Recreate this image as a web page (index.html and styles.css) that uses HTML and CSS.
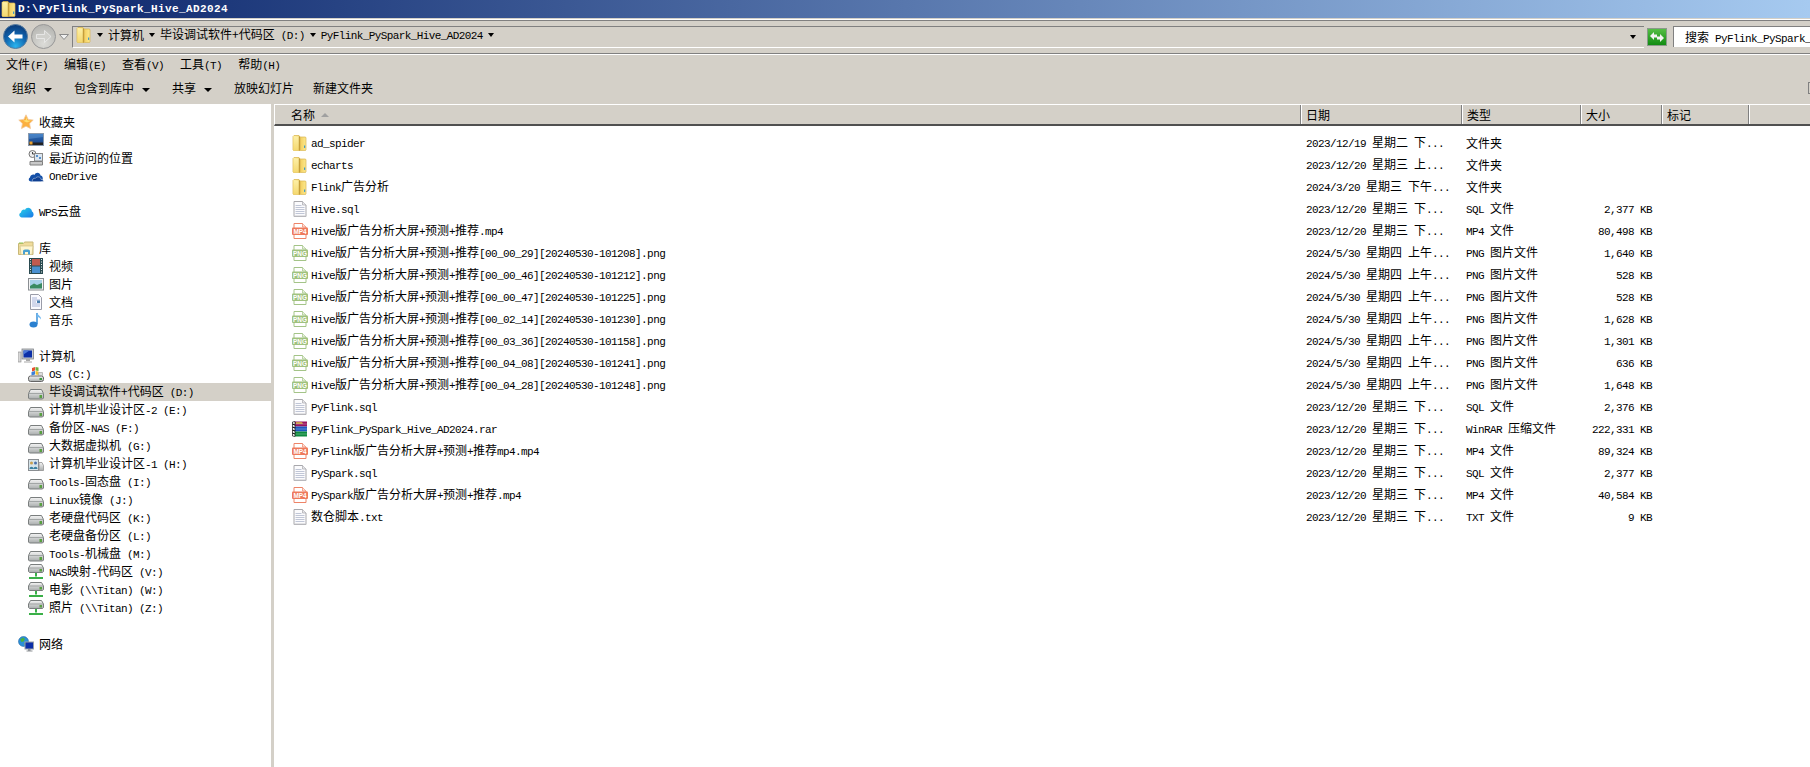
FILE: index.html
```html
<!DOCTYPE html>
<html lang="zh-CN">
<head>
<meta charset="utf-8">
<title>D:\PyFlink_PySpark_Hive_AD2024</title>
<link rel="stylesheet" href="styles.css">
</head>
<body>
<svg class="defs" width="0" height="0" aria-hidden="true">
  <defs>
    <linearGradient id="gFolder" x1="0" y1="0" x2="1" y2="0"><stop offset="0" stop-color="#f6d868"/><stop offset=".6" stop-color="#f4d264"/><stop offset="1" stop-color="#fce88e"/></linearGradient>
    <linearGradient id="gFoldL" x1="0" y1="0" x2="0" y2="1"><stop offset="0" stop-color="#fdf0a8"/><stop offset="1" stop-color="#f4d870"/></linearGradient>
    <linearGradient id="gSky" x1="0" y1="0" x2="0" y2="1"><stop offset="0" stop-color="#2a6fc0"/><stop offset="1" stop-color="#1b3e7c"/></linearGradient>
    <linearGradient id="gCloud" x1="0" y1="0" x2="1" y2="1"><stop offset="0" stop-color="#28d4e8"/><stop offset="1" stop-color="#1a78e8"/></linearGradient>
    <linearGradient id="gHdd" x1="0" y1="0" x2="0" y2="1"><stop offset="0" stop-color="#f4f4f4"/><stop offset="1" stop-color="#a8acac"/></linearGradient>
    <linearGradient id="gGreen" x1="0" y1="0" x2="0" y2="1"><stop offset="0" stop-color="#58c048"/><stop offset="1" stop-color="#0f8a10"/></linearGradient>
    <radialGradient id="gBack" cx=".5" cy=".9" r=".9"><stop offset="0" stop-color="#2ab4ee"/><stop offset=".55" stop-color="#0f62ac"/><stop offset="1" stop-color="#0b3a78"/></radialGradient>
    <radialGradient id="gFwd" cx=".5" cy=".8" r=".8"><stop offset="0" stop-color="#dcdcd8"/><stop offset="1" stop-color="#b4b4b0"/></radialGradient>

    <symbol id="folder" viewBox="0 0 16 16">
      <path d="M1 1.500 2 .5h5l1 1.500h5.500l.5 1V15l-.6.6H1.600L1 15z" fill="url(#gFolder)" stroke="#d8b450" stroke-width=".7"/>
      <path d="M7.200 1.400 L1.400 .9 V15.400 H7.200z" fill="url(#gFoldL)"/>
      <path d="M7.400 1.600 V15.400" stroke="#b8922e" stroke-width="1.200"/>
      <path d="M8.200 2.400 V15" stroke="#e0bc58" stroke-width="1"/>
      <rect x="12" y="10.500" width="1.200" height="2.400" fill="#3f9cc8"/>
    </symbol>
    <symbol id="file" viewBox="0 0 16 16">
      <path d="M2 .5h8.500L14 4v11.500H2z" fill="#fbfbfd" stroke="#a8a8ac"/>
      <path d="M10.500.5V4H14" fill="#e6e6ea" stroke="#a8a8ac" stroke-width=".7"/>
      <path d="M3.500 4.500h6M3.500 6.500h9M3.500 8.500h9M3.500 10.500h9M3.500 12.500h9" stroke="#c0c6d6" stroke-width="1"/>
      <path d="M2 14.500h12v1H2z" fill="#c8c8cc"/>
    </symbol>
    <symbol id="mp4" viewBox="0 0 16 16">
      <path d="M2 .5h8.500L14 4v11.500H2z" fill="#fff" stroke="#ee8468"/>
      <path d="M10.500.5V4H14" fill="#fde2d8" stroke="#ee8468" stroke-width=".7"/>
      <rect x="0" y="4.600" width="16" height="7.400" rx="1" fill="#ee7a5c"/>
      <text class="badge" x="8" y="10.600" text-anchor="middle">MP4</text>
    </symbol>
    <symbol id="png" viewBox="0 0 16 16">
      <path d="M2 .5h8.500L14 4v11.500H2z" fill="#fff" stroke="#a4c488"/>
      <path d="M10.500.5V4H14" fill="#e8f2de" stroke="#a4c488" stroke-width=".7"/>
      <rect x="0" y="4.600" width="16" height="7.400" rx="1" fill="#a0c27e"/>
      <text class="badge" x="8" y="10.600" text-anchor="middle">PNG</text>
    </symbol>
    <symbol id="rar" viewBox="0 0 16 16">
      <path d="M3 .5h12v5H3z" fill="#98145e"/>
      <path d="M4 1.200h6l1 1.600H4z" fill="#d8c040"/>
      <path d="M3 5.500h12v5H3z" fill="#1c58c0"/>
      <path d="M3 10.500h12v5H3z" fill="#0e8a3e"/>
      <path d="M3 3h12M3 8h12M3 13h12" stroke="#fff" stroke-width=".6" opacity=".5"/>
      <path d="M.5 1 3 .5v15L.5 15z" fill="#fff" stroke="#111" stroke-width=".7"/>
      <path d="M.5 3 3 4M.5 6 3 7M.5 9l2.500 1M.5 12 3 13" stroke="#111" stroke-width="1.200"/>
    </symbol>

    <symbol id="star" viewBox="0 0 16 16">
      <path d="M8 .8l2.200 4.600 5 .7-3.600 3.500.9 5-4.500-2.400-4.500 2.400.9-5L.8 6.100l5-.7z" fill="#fbb040" stroke="#f2c89a" stroke-width=".8"/>
      <path d="M8 3l1.500 3.400 3.500.4-4 1.700L5 6.800l3-.7z" fill="#ffe070"/>
    </symbol>
    <symbol id="desktop" viewBox="0 0 16 16">
      <rect x=".5" y="1.500" width="15" height="12" fill="url(#gSky)" stroke="#8898ac"/>
      <path d="M1 10.500h14v2.500H1z" fill="#222"/>
      <rect x="1.500" y="9.500" width="3" height="3" fill="#e8a030"/>
      <path d="M1 2h14v3L1 7z" fill="#7ab0e0" opacity=".35"/>
    </symbol>
    <symbol id="recent" viewBox="0 0 16 16">
      <circle cx="4.500" cy="4" r="3.500" fill="#eee" stroke="#777"/>
      <path d="M4.500 2v2h2" stroke="#444" fill="none"/>
      <rect x="6.500" y="3.500" width="8" height="7.500" fill="#dce6f0" stroke="#888"/>
      <rect x="8" y="5" width="2" height="2" fill="#5a90c8"/><rect x="11" y="7" width="2" height="2" fill="#5a90c8"/>
      <path d="M2 11.500h12.500v3.500H2z" fill="#c8c8c8" stroke="#808080"/>
    </symbol>
    <symbol id="onedrive" viewBox="0 0 16 16">
      <path d="M3 13.500C.6 13.500 0 10.500 2 9.500 2.500 6.500 5.500 6 6.500 7 7.500 3.800 12 3.800 12.500 7.500c2.700.3 3.200 4.500.5 6z" fill="#1450a8"/>
      <path d="M4.500 13.500c-.8-2 1-3.700 3-3.200 1.500-2.500 5.500-1.500 5.500 1.200 1.500-.2 2.500.8 2.500 2z" fill="#0f3f90" stroke="#fff" stroke-width=".4"/>
    </symbol>
    <symbol id="cloud" viewBox="0 0 16 16">
      <path d="M4 13.500C1 13.500.2 9.500 3 8.500 3.500 5.500 6 5 7 6 8 2.600 13.500 3 14 7.500c2.500 1.500 2 6-1 6z" fill="url(#gCloud)"/>
    </symbol>
    <symbol id="library" viewBox="0 0 16 16">
      <path d="M.5 3.500h5l1-1.500h8.500v12.500H.5z" fill="#f0dc9c" stroke="#c8b878"/>
      <path d="M1 2.500h4v1H1z" fill="#90c850"/>
      <path d="M2 6h13l-1 8.500H3z" fill="#fff6d0" stroke="#d0c088" stroke-width=".7"/>
      <path d="M5 14.500V11q0-1.500 2-1.500h3q2 0 2 1.500v3.500h-2V12H7v2.500z" fill="#4aa0d0"/>
    </symbol>
    <symbol id="video" viewBox="0 0 16 16">
      <rect x="1" y="0" width="14" height="16" fill="#2a4a50"/>
      <rect x="4" y="1" width="8" height="6.500" fill="#c05a50"/>
      <rect x="4" y="8.500" width="8" height="6.500" fill="#4a90d0"/>
      <path d="M2 1.500h1M2 4h1M2 6.500h1M2 9h1M2 11.500h1M2 14h1M13 1.500h1M13 4h1M13 6.500h1M13 9h1M13 11.500h1M13 14h1" stroke="#e8f0f0" stroke-width="1.200"/>
    </symbol>
    <symbol id="picture" viewBox="0 0 16 16">
      <rect x=".5" y="2.500" width="15" height="11.500" fill="#f4f4f4" stroke="#8a8e92"/>
      <rect x="2" y="4" width="12" height="8.500" fill="#a8d0e8"/>
      <path d="M2 10l4-2.500 3 1.500 5-2v5.500H2z" fill="#3a8a60"/>
    </symbol>
    <symbol id="doc" viewBox="0 0 16 16">
      <path d="M2.500.5h8l3 3v12h-11z" fill="#fafaff" stroke="#9a9ca8"/>
      <path d="M4 4h5M4 6h8M4 8h4M4 10h8M4 12h8" stroke="#a8b4d8"/>
      <rect x="9" y="6.500" width="3" height="2.500" fill="#4a80b0"/>
    </symbol>
    <symbol id="music" viewBox="0 0 16 16">
      <path d="M9 1v11" stroke="#3a90d8" stroke-width="1.500"/>
      <path d="M9 .5c.5 3 4.500 3.500 4 7-1-2-3-2.500-4-2.500z" fill="#70b8f0"/>
      <ellipse cx="5.500" cy="12.500" rx="4" ry="3" fill="#2a80d0"/>
    </symbol>
    <symbol id="computer" viewBox="0 0 16 16">
      <rect x="0" y="4" width="3" height="10" fill="#d8d8d8" stroke="#888" stroke-width=".6"/>
      <rect x="4" y="1" width="11.500" height="10" fill="#c8ccd0" stroke="#808488" stroke-width=".8"/>
      <rect x="5.500" y="2.500" width="8.500" height="7" fill="#0c2fa8"/>
      <path d="M5.500 2.500h6l-6 4z" fill="#4a78d8"/>
      <path d="M8 11h4v2H8zM6 13.500h8v1H6z" fill="#a8a8a8"/>
    </symbol>
    <symbol id="sysdrive" viewBox="0 0 16 16">
      <rect x=".5" y="10" width="15" height="5.500" rx="2" fill="url(#gHdd)" stroke="#666"/>
      <rect x="11.500" y="12" width="2.500" height="2" fill="#3a9a40"/>
      <path d="M4 2l3-1v3.500l-3 1z" fill="#e85030"/><path d="M7.500 1l3 .5v3.500l-3-.5z" fill="#70b040"/>
      <path d="M3.500 6l3.500-1v3.500l-3.500 1z" fill="#3a80d8"/><path d="M7.500 5l3 .5V9l-3-.5z" fill="#f0c030"/>
      <path d="M10.500 6.500h4v3h-4z" fill="#ddd" stroke="#888" stroke-width=".5"/>
    </symbol>
    <symbol id="hdd" viewBox="0 0 16 16">
      <path d="M2.500 5.500h11l2 4v4.500l-1 1H1.500l-1-1V9.500z" fill="url(#gHdd)" stroke="#7a7e7e"/>
      <path d="M1 9.500h14" stroke="#8c9090" stroke-width=".7"/>
      <rect x="11.500" y="11" width="2.500" height="3" fill="#58a040"/>
    </symbol>
    <symbol id="userdrive" viewBox="0 0 16 16">
      <rect x=".5" y="3.500" width="10" height="11" fill="#d6e4ea" stroke="#8a8e92"/>
      <circle cx="3.500" cy="7" r="1.500" fill="#c8a050"/><circle cx="7.500" cy="7" r="1.500" fill="#4a70a8"/>
      <path d="M1.500 13c0-3 4-3 4 0zM5.500 13c0-3 4-3 4 0z" fill="#3a80a0"/>
      <path d="M11 6.500h3l1.500 3v5H11z" fill="url(#gHdd)" stroke="#888" stroke-width=".7"/>
    </symbol>
    <symbol id="netdrive" viewBox="0 0 16 16">
      <path d="M2.500.5h11l2 3.500v3.500l-1 1H1.500l-1-1V4z" fill="url(#gHdd)" stroke="#7a7e7e"/>
      <path d="M1 4h14" stroke="#8c9090" stroke-width=".7"/>
      <rect x="11.500" y="5" width="2.500" height="2.500" fill="#58a040"/>
      <path d="M7 9h2v3.500H7zM1 13h14v2H1z" fill="#3ab048"/>
    </symbol>
    <symbol id="network" viewBox="0 0 16 16">
      <circle cx="5.500" cy="5.500" r="5" fill="#2a90d8" stroke="#1a5a98" stroke-width=".5"/>
      <path d="M2 3.500l3-2 2 1.500-1.500 2.500-2 .5zM6 7l2.500.5-1 2.500z" fill="#48b040"/>
      <rect x="7" y="6" width="8.500" height="7" fill="#0c2fa8" stroke="#9aa0a8"/>
      <path d="M10 13h2.500v1.500H10zM8.500 14.500h6v1h-6z" fill="#909498"/>
    </symbol>
  </defs>
</svg>

<div class="window">
  <header class="title">
    <svg class="ico"><use href="#folder"/></svg>
    <span class="title-text">D:\PyFlink_PySpark_Hive_AD2024</span>
  </header>

  <div class="nav">
    <svg class="navbtn" viewBox="0 0 25 25"><circle cx="12.500" cy="12.500" r="12" fill="url(#gBack)" stroke="#5a7ea0"/><path d="M5 12.500 11.500 6.500v4h8v4h-8v4z" fill="#fff"/></svg>
    <svg class="navbtn" viewBox="0 0 25 25"><circle cx="12.500" cy="12.500" r="12" fill="url(#gFwd)" stroke="#989898"/><path d="M20 12.500 13.500 6.500v4h-8v4h8v4z" fill="#d0d0cc" stroke="#ececec" stroke-width=".8"/></svg>
    <svg class="navdrop" viewBox="0 0 10 6"><path d="M.5.500h9L5 5.500z" fill="#f0f0f0" stroke="#8a8a8a"/></svg>
    <div class="crumbs">
      <svg class="ico"><use href="#folder"/></svg>
      <i class="caret"></i>
      <span>计算机</span>
      <i class="caret"></i>
      <span>毕设调试软件+代码区 <span class="m">(D:)</span></span>
      <i class="caret"></i>
      <span><span class="m">PyFlink_PySpark_Hive_AD2024</span></span>
      <i class="caret"></i>
      <i class="caret crumb-drop"></i>
    </div>
    <svg class="refresh" viewBox="0 0 20 18"><rect x=".5" y=".5" width="19" height="17" fill="url(#gGreen)" stroke="#8a9a8a"/><path d="M3 8l4-4v2.500h3v3H7V12zM17 10l-4 4v-2.500h-3v-3h3V6z" fill="#f4f4f4"/></svg>
    <div class="search"><span>搜索 <span class="m">PyFlink_PySpark_Hive_AD2024</span></span></div>
  </div>

  <nav class="menu">
    <span>文件<span class="m">(F)</span></span>
    <span>编辑<span class="m">(E)</span></span>
    <span>查看<span class="m">(V)</span></span>
    <span>工具<span class="m">(T)</span></span>
    <span>帮助<span class="m">(H)</span></span>
  </nav>

  <div class="tools">
    <span class="tool">组织<i class="caret big"></i></span>
    <span class="tool">包含到库中<i class="caret big"></i></span>
    <span class="tool">共享<i class="caret big"></i></span>
    <span class="tool tight">放映幻灯片</span>
    <span class="tool">新建文件夹</span>
    <span class="grip"></span>
  </div>

  <div class="panes">
    <aside class="side">
      <div class="group">
        <div class="node"><svg class="ico"><use href="#star"/></svg>收藏夹</div>
        <div class="node sub"><svg class="ico"><use href="#desktop"/></svg>桌面</div>
        <div class="node sub"><svg class="ico"><use href="#recent"/></svg>最近访问的位置</div>
        <div class="node sub"><svg class="ico"><use href="#onedrive"/></svg><span><span class="m">OneDrive</span></span></div>
      </div>
      <div class="group">
        <div class="node"><svg class="ico"><use href="#cloud"/></svg><span><span class="m">WPS</span>云盘</span></div>
      </div>
      <div class="group">
        <div class="node"><svg class="ico"><use href="#library"/></svg>库</div>
        <div class="node sub"><svg class="ico"><use href="#video"/></svg>视频</div>
        <div class="node sub"><svg class="ico"><use href="#picture"/></svg>图片</div>
        <div class="node sub"><svg class="ico"><use href="#doc"/></svg>文档</div>
        <div class="node sub"><svg class="ico"><use href="#music"/></svg>音乐</div>
      </div>
      <div class="group">
        <div class="node"><svg class="ico"><use href="#computer"/></svg>计算机</div>
        <div class="node sub"><svg class="ico"><use href="#sysdrive"/></svg><span><span class="m">OS (C:)</span></span></div>
        <div class="node sub current"><svg class="ico"><use href="#hdd"/></svg><span>毕设调试软件+代码区 <span class="m">(D:)</span></span></div>
        <div class="node sub"><svg class="ico"><use href="#hdd"/></svg><span>计算机毕业设计区<span class="m">-2 (E:)</span></span></div>
        <div class="node sub"><svg class="ico"><use href="#hdd"/></svg><span>备份区<span class="m">-NAS (F:)</span></span></div>
        <div class="node sub"><svg class="ico"><use href="#hdd"/></svg><span>大数据虚拟机 <span class="m">(G:)</span></span></div>
        <div class="node sub"><svg class="ico"><use href="#userdrive"/></svg><span>计算机毕业设计区<span class="m">-1 (H:)</span></span></div>
        <div class="node sub"><svg class="ico"><use href="#hdd"/></svg><span><span class="m">Tools-</span>固态盘 <span class="m">(I:)</span></span></div>
        <div class="node sub"><svg class="ico"><use href="#hdd"/></svg><span><span class="m">Linux</span>镜像 <span class="m">(J:)</span></span></div>
        <div class="node sub"><svg class="ico"><use href="#hdd"/></svg><span>老硬盘代码区 <span class="m">(K:)</span></span></div>
        <div class="node sub"><svg class="ico"><use href="#hdd"/></svg><span>老硬盘备份区 <span class="m">(L:)</span></span></div>
        <div class="node sub"><svg class="ico"><use href="#hdd"/></svg><span><span class="m">Tools-</span>机械盘 <span class="m">(M:)</span></span></div>
        <div class="node sub"><svg class="ico"><use href="#netdrive"/></svg><span><span class="m">NAS</span>映射<span class="m">-</span>代码区 <span class="m">(V:)</span></span></div>
        <div class="node sub"><svg class="ico"><use href="#netdrive"/></svg><span>电影 <span class="m">(\\Titan) (W:)</span></span></div>
        <div class="node sub"><svg class="ico"><use href="#netdrive"/></svg><span>照片 <span class="m">(\\Titan) (Z:)</span></span></div>
      </div>
      <div class="group">
        <div class="node"><svg class="ico"><use href="#network"/></svg>网络</div>
      </div>
    </aside>

    <main class="list">
      <div class="head">
        <div class="hcell first">名称<i class="sort"></i></div>
        <div class="hcell">日期</div>
        <div class="hcell">类型</div>
        <div class="hcell">大小</div>
        <div class="hcell">标记</div>
      </div>
      <div class="rows">
        <div class="row"><div class="name"><svg class="ico"><use href="#folder"/></svg><span><span class="m">ad_spider</span></span></div><div><span class="m">2023/12/19</span> 星期二 下<span class="m">...</span></div><div>文件夹</div><div class="size"></div></div>
        <div class="row"><div class="name"><svg class="ico"><use href="#folder"/></svg><span><span class="m">echarts</span></span></div><div><span class="m">2023/12/20</span> 星期三 上<span class="m">...</span></div><div>文件夹</div><div class="size"></div></div>
        <div class="row"><div class="name"><svg class="ico"><use href="#folder"/></svg><span><span class="m">Flink</span>广告分析</span></div><div><span class="m">2024/3/20</span> 星期三 下午<span class="m">...</span></div><div>文件夹</div><div class="size"></div></div>
        <div class="row"><div class="name"><svg class="ico"><use href="#file"/></svg><span><span class="m">Hive.sql</span></span></div><div><span class="m">2023/12/20</span> 星期三 下<span class="m">...</span></div><div><span class="m">SQL</span> 文件</div><div class="size"><span class="m">2,377 KB</span></div></div>
        <div class="row"><div class="name"><svg class="ico"><use href="#mp4"/></svg><span><span class="m">Hive</span>版广告分析大屏<span class="m">+</span>预测<span class="m">+</span>推荐<span class="m">.mp4</span></span></div><div><span class="m">2023/12/20</span> 星期三 下<span class="m">...</span></div><div><span class="m">MP4</span> 文件</div><div class="size"><span class="m">80,498 KB</span></div></div>
        <div class="row"><div class="name"><svg class="ico"><use href="#png"/></svg><span><span class="m">Hive</span>版广告分析大屏<span class="m">+</span>预测<span class="m">+</span>推荐<span class="m">[00_00_29][20240530-101208].png</span></span></div><div><span class="m">2024/5/30</span> 星期四 上午<span class="m">...</span></div><div><span class="m">PNG</span> 图片文件</div><div class="size"><span class="m">1,640 KB</span></div></div>
        <div class="row"><div class="name"><svg class="ico"><use href="#png"/></svg><span><span class="m">Hive</span>版广告分析大屏<span class="m">+</span>预测<span class="m">+</span>推荐<span class="m">[00_00_46][20240530-101212].png</span></span></div><div><span class="m">2024/5/30</span> 星期四 上午<span class="m">...</span></div><div><span class="m">PNG</span> 图片文件</div><div class="size"><span class="m">528 KB</span></div></div>
        <div class="row"><div class="name"><svg class="ico"><use href="#png"/></svg><span><span class="m">Hive</span>版广告分析大屏<span class="m">+</span>预测<span class="m">+</span>推荐<span class="m">[00_00_47][20240530-101225].png</span></span></div><div><span class="m">2024/5/30</span> 星期四 上午<span class="m">...</span></div><div><span class="m">PNG</span> 图片文件</div><div class="size"><span class="m">528 KB</span></div></div>
        <div class="row"><div class="name"><svg class="ico"><use href="#png"/></svg><span><span class="m">Hive</span>版广告分析大屏<span class="m">+</span>预测<span class="m">+</span>推荐<span class="m">[00_02_14][20240530-101230].png</span></span></div><div><span class="m">2024/5/30</span> 星期四 上午<span class="m">...</span></div><div><span class="m">PNG</span> 图片文件</div><div class="size"><span class="m">1,628 KB</span></div></div>
        <div class="row"><div class="name"><svg class="ico"><use href="#png"/></svg><span><span class="m">Hive</span>版广告分析大屏<span class="m">+</span>预测<span class="m">+</span>推荐<span class="m">[00_03_36][20240530-101158].png</span></span></div><div><span class="m">2024/5/30</span> 星期四 上午<span class="m">...</span></div><div><span class="m">PNG</span> 图片文件</div><div class="size"><span class="m">1,301 KB</span></div></div>
        <div class="row"><div class="name"><svg class="ico"><use href="#png"/></svg><span><span class="m">Hive</span>版广告分析大屏<span class="m">+</span>预测<span class="m">+</span>推荐<span class="m">[00_04_08][20240530-101241].png</span></span></div><div><span class="m">2024/5/30</span> 星期四 上午<span class="m">...</span></div><div><span class="m">PNG</span> 图片文件</div><div class="size"><span class="m">636 KB</span></div></div>
        <div class="row"><div class="name"><svg class="ico"><use href="#png"/></svg><span><span class="m">Hive</span>版广告分析大屏<span class="m">+</span>预测<span class="m">+</span>推荐<span class="m">[00_04_28][20240530-101248].png</span></span></div><div><span class="m">2024/5/30</span> 星期四 上午<span class="m">...</span></div><div><span class="m">PNG</span> 图片文件</div><div class="size"><span class="m">1,648 KB</span></div></div>
        <div class="row"><div class="name"><svg class="ico"><use href="#file"/></svg><span><span class="m">PyFlink.sql</span></span></div><div><span class="m">2023/12/20</span> 星期三 下<span class="m">...</span></div><div><span class="m">SQL</span> 文件</div><div class="size"><span class="m">2,376 KB</span></div></div>
        <div class="row"><div class="name"><svg class="ico"><use href="#rar"/></svg><span><span class="m">PyFlink_PySpark_Hive_AD2024.rar</span></span></div><div><span class="m">2023/12/20</span> 星期三 下<span class="m">...</span></div><div><span class="m">WinRAR</span> 压缩文件</div><div class="size"><span class="m">222,331 KB</span></div></div>
        <div class="row"><div class="name"><svg class="ico"><use href="#mp4"/></svg><span><span class="m">PyFlink</span>版广告分析大屏<span class="m">+</span>预测<span class="m">+</span>推荐<span class="m">mp4.mp4</span></span></div><div><span class="m">2023/12/20</span> 星期三 下<span class="m">...</span></div><div><span class="m">MP4</span> 文件</div><div class="size"><span class="m">89,324 KB</span></div></div>
        <div class="row"><div class="name"><svg class="ico"><use href="#file"/></svg><span><span class="m">PySpark.sql</span></span></div><div><span class="m">2023/12/20</span> 星期三 下<span class="m">...</span></div><div><span class="m">SQL</span> 文件</div><div class="size"><span class="m">2,377 KB</span></div></div>
        <div class="row"><div class="name"><svg class="ico"><use href="#mp4"/></svg><span><span class="m">PySpark</span>版广告分析大屏<span class="m">+</span>预测<span class="m">+</span>推荐<span class="m">.mp4</span></span></div><div><span class="m">2023/12/20</span> 星期三 下<span class="m">...</span></div><div><span class="m">MP4</span> 文件</div><div class="size"><span class="m">40,584 KB</span></div></div>
        <div class="row"><div class="name"><svg class="ico"><use href="#file"/></svg><span>数仓脚本<span class="m">.txt</span></span></div><div><span class="m">2023/12/20</span> 星期三 下<span class="m">...</span></div><div><span class="m">TXT</span> 文件</div><div class="size"><span class="m">9 KB</span></div></div>
      </div>
    </main>
  </div>
</div>
</body>
</html>
```

FILE: styles.css
```css
* { box-sizing: border-box; }
html, body { margin: 0; height: 100%; overflow: hidden; }
body {
  font: 12px/18px "Noto Sans CJK SC", "Liberation Sans", sans-serif;
  word-spacing: 3.3px;
  color: #000;
  background: #d4d0c8;
}
.defs { position: absolute; }
.m {
  font-family: "Liberation Mono", monospace;
  font-size: 11px;
  letter-spacing: -.6px;
  word-spacing: 0;
}
.ico { width: 16px; height: 16px; flex: none; display: block; }
.badge { font: bold 6.4px "Liberation Sans", sans-serif; word-spacing: 0; fill: #fff; }

.window { display: flex; flex-direction: column; height: 767px; }

.title {
  height: 18px;
  display: flex;
  align-items: center;
  gap: 1px;
  padding-left: 1px;
  background: linear-gradient(90deg, #0a246a, #a6caf0);
  flex: none;
}
.title-text {
  font: bold 11px "Liberation Mono", monospace;
  letter-spacing: .4px;
  color: #fff;
}

.nav {
  height: 35px;
  flex: none;
  display: flex;
  align-items: center;
  padding-left: 3px;
  margin-top: 1px;
  border-top: 1px solid #fff;
  border-bottom: 1px solid #808080;
  box-shadow: inset 0 1px 0 #808080;
}
.navbtn { width: 25px; height: 25px; flex: none; margin-right: 3px; }
.navdrop { width: 10px; height: 6px; flex: none; margin-right: 3px; }

.crumbs {
  flex: 1;
  height: 22px;
  display: flex;
  align-items: center;
  gap: 5px;
  padding: 0 0 3px 3px;
  border-top: 1px solid #808080;
  border-left: 1px solid #808080;
  border-bottom: 1px solid #fff;
  min-width: 0;
}
.crumb-drop { margin: 3px 8px 0 auto; }

.caret {
  display: inline-block;
  flex: none;
  width: 0;
  height: 0;
  border-left: 3.5px solid transparent;
  border-right: 3.5px solid transparent;
  border-top: 4px solid #000;
}
.caret.big {
  border-left-width: 4px;
  border-right-width: 4px;
  margin-left: 8px;
  vertical-align: 1px;
}

.refresh { width: 20px; height: 18px; flex: none; margin-left: 3px; }
.search {
  width: 137px;
  height: 21px;
  flex: none;
  margin-left: 6px;
  padding-left: 11px;
  background: #fff;
  border-left: 1px solid #808080;
  border-top: 1px solid #808080;
  white-space: nowrap;
  overflow: hidden;
  line-height: 20px;
}

.menu {
  height: 19px;
  flex: none;
  display: flex;
  gap: 16px;
  padding-left: 6px;
  border-top: 1px solid #fff;
}

.tools {
  height: 31px;
  flex: none;
  display: flex;
  align-items: center;
  gap: 22px;
  padding: 0 0 2px 12px;
}
.tool.tight { margin-right: -3px; }
.grip {
  width: 2px;
  height: 12px;
  margin-left: auto;
  border-left: 1px solid #808080;
  border-top: 1px solid #808080;
  border-bottom: 1px solid #808080;
}

.panes { flex: 1; display: flex; min-height: 0; }

.side {
  width: 274px;
  flex: none;
  background: #fff;
  border-right: 3px solid #d4d0c8;
  padding-top: 9px;
}
.group { margin-bottom: 18px; }
.node {
  height: 18px;
  display: flex;
  align-items: center;
  gap: 5px;
  padding-left: 18px;
  white-space: nowrap;
}
.node.sub { padding-left: 28px; }
.node.current { background: #d4d0c8; }

.list { flex: 1; min-width: 0; background: #fff; }

.head {
  height: 22px;
  display: grid;
  grid-template-columns: 1026px 161px 119px 81px 87px 1fr;
  background: #d4d0c8;
  border-top: 1px solid #fff;
  border-left: 1px solid #fff;
  border-bottom: 2px solid #505050;
}
.hcell {
  display: flex;
  align-items: center;
  padding-left: 5px;
  border-right: 1px solid #808080;
  box-shadow: 1px 0 0 #fff;
}
.hcell.first { padding-left: 16px; }
.sort {
  width: 0;
  height: 0;
  margin-left: 6px;
  border-left: 4px solid transparent;
  border-right: 4px solid transparent;
  border-bottom: 4px solid #a0a0a0;
}

.rows { padding-top: 6px; }
.row {
  height: 22px;
  display: grid;
  grid-template-columns: 1027px 160px 119px 72px;
  align-items: center;
  white-space: nowrap;
}
.row > div { padding-left: 5px; }
.row > .name {
  display: flex;
  align-items: center;
  gap: 3px;
  padding-left: 18px;
}
.row > .size { padding: 0; text-align: right; }
```
